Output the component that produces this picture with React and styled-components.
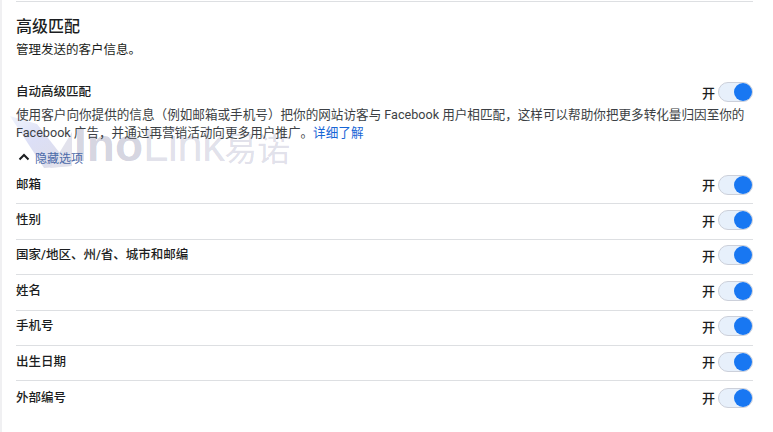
import React from "react";
import styled, { createGlobalStyle } from "styled-components";

const GlobalStyle = createGlobalStyle`
  html, body {
    margin: 0;
    padding: 0;
    background: #fff;
    overflow: hidden;
  }
`;

const Page = styled.div`
  position: relative;
  width: 773px;
  height: 432px;
  box-sizing: border-box;
  border-left: 2px solid #f0f0f2;
  padding: 1px 20px 0 14px;
  font-family: Roboto, "Noto Sans CJK SC", sans-serif;
  color: #1c1e21;
  overflow: hidden;
`;

const Panel = styled.div`
  position: relative;
  z-index: 1;
  border-top: 1px solid #dddfe2;
  padding-top: 15px;
`;

const Title = styled.h2`
  margin: 0;
  font-size: 16px;
  line-height: 20px;
  font-weight: 500;
`;

const Subtitle = styled.p`
  margin: 4px 0 0;
  font-size: 12.5px;
  line-height: 18px;
`;

const AutoRow = styled.div`
  display: flex;
  align-items: center;
  justify-content: space-between;
  margin-top: 23px;
  height: 20px;
`;

const Label = styled.span`
  font-size: 12.5px;
  font-weight: 500;
  line-height: 18px;
`;

const Description = styled.p`
  margin: 4px 0 0;
  font-size: 12.6px;
  line-height: 18px;
  color: #3c3f44;
`;

const MoreLink = styled.a`
  color: #1766d6;
`;

const Collapse = styled.div`
  display: flex;
  align-items: center;
  gap: 5px;
  margin: 6px 0 3px;
  padding-left: 2px;
  height: 18px;
  font-size: 12px;
  color: #4b6aa8;
`;

const Row = styled.div`
  display: flex;
  align-items: center;
  justify-content: space-between;
  height: 35.4px;
  box-sizing: border-box;
  padding-bottom: 3px;
  border-bottom: ${(p) => (p.$last ? "none" : "1px solid #dddfe2")};
`;

const Switch = styled.div`
  display: flex;
  align-items: center;
  gap: 3px;
  font-size: 13px;
  font-weight: 500;
`;

const Track = styled.span`
  display: flex;
  justify-content: flex-end;
  align-items: center;
  width: 35px;
  height: 20px;
  box-sizing: border-box;
  border: 1px solid #ccd0da;
  border-radius: 10px;
  background: #e7f0fb;
`;

const Knob = styled.span`
  width: 18px;
  height: 18px;
  border-radius: 50%;
  background: #1877f2;
`;

const Watermark = styled.div`
  position: absolute;
  left: 8px;
  top: 116px;
  display: flex;
  align-items: flex-end;
  pointer-events: none;
`;

const MarkLogo = styled.svg`
  display: block;
  margin-bottom: 3px;
`;

const MarkWords = styled.div`
  display: flex;
  align-items: baseline;
  margin-left: 2px;
  font-family: "Liberation Sans", "Noto Sans CJK SC", sans-serif;
  line-height: 46px;
  white-space: nowrap;
`;

const MarkText = styled.span`
  font-size: ${(p) => p.$size}px;
  font-weight: ${(p) => (p.$bold ? 700 : 400)};
  letter-spacing: ${(p) => p.$spacing || 0}px;
  color: ${(p) => (p.$bold ? "rgba(70, 70, 120, 0.24)" : "rgba(70, 70, 130, 0.18)")};
`;

const Toggle = () => (
  <Switch>
    开
    <Track>
      <Knob />
    </Track>
  </Switch>
);

const fields = ["邮箱", "性别", "国家/地区、州/省、城市和邮编", "姓名", "手机号", "出生日期", "外部编号"];

export default function App() {
  return (
    <>
      <GlobalStyle />
      <Page>
        <Watermark>
          <MarkLogo width="62" height="54" viewBox="0 0 62 54">
            <defs>
              <linearGradient id="markArm" x1="0" y1="0" x2="0.7" y2="1">
                <stop offset="0" stopColor="#f0f4fd" />
                <stop offset="0.5" stopColor="#dcdff6" />
                <stop offset="1" stopColor="#dedeea" />
              </linearGradient>
            </defs>
            <path d="M0 0 27 8 60 50 34 52Z" fill="url(#markArm)" />
            <path d="M62 16 62 50 40 52Z" fill="#e2e2ec" />
          </MarkLogo>
          <MarkWords>
            <MarkText $bold $size={46}>Ino</MarkText>
            <MarkText $size={46} $spacing={-0.8}>Link</MarkText>
            <MarkText $size={33}>易诺</MarkText>
          </MarkWords>
        </Watermark>
        <Panel>
          <Title>高级匹配</Title>
          <Subtitle>管理发送的客户信息。</Subtitle>
          <AutoRow>
            <Label>自动高级匹配</Label>
            <Toggle />
          </AutoRow>
          <Description>
            使用客户向你提供的信息（例如邮箱或手机号）把你的网站访客与 Facebook 用户相匹配，这样可以帮助你把更多转化量归因至你的 Facebook 广告，并通过再营销活动向更多用户推广。
            <MoreLink>详细了解</MoreLink>
          </Description>
          <Collapse>
            <svg width="12" height="8" viewBox="0 0 12 8">
              <path d="M1.5 6.5 6 2l4.5 4.5" fill="none" stroke="#1c1e21" strokeWidth="2" />
            </svg>
            隐藏选项
          </Collapse>
          {fields.map((f, i) => (
            <Row key={f} $last={i === fields.length - 1}>
              <Label>{f}</Label>
              <Toggle />
            </Row>
          ))}
        </Panel>
      </Page>
    </>
  );
}
